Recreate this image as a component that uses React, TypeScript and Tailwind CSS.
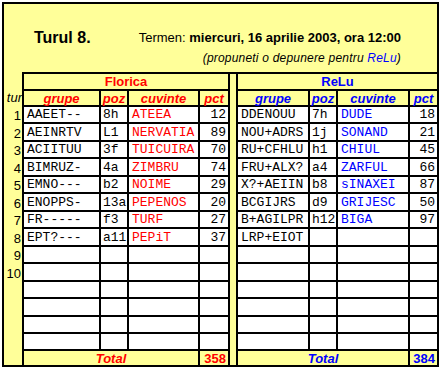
import React from 'react';

type Row = [string, string, string, string];

const florica: Row[] = [
  ['AAEET--', '8h', 'ATEEA', '12'],
  ['AEINRTV', 'L1', 'NERVATIA', '89'],
  ['ACIITUU', '3f', 'TUICUIRA', '70'],
  ['BIMRUZ-', '4a', 'ZIMBRU', '74'],
  ['EMNO---', 'b2', 'NOIME', '29'],
  ['ENOPPS-', '13a', 'PEPENOS', '20'],
  ['FR-----', 'f3', 'TURF', '27'],
  ['EPT?---', 'a11', 'PEPiT', '37'],
];

const relu: Row[] = [
  ['DDENOUU', '7h', 'DUDE', '18'],
  ['NOU+ADRS', '1j', 'SONAND', '21'],
  ['RU+CFHLU', 'h1', 'CHIUL', '45'],
  ['FRU+ALX?', 'a4', 'ZARFUL', '66'],
  ['X?+AEIIN', 'b8', 'sINAXEI', '87'],
  ['BCGIJRS', 'd9', 'GRIJESC', '50'],
  ['B+AGILPR', 'h12', 'BIGA', '97'],
  ['LRP+EIOT', '', '', ''],
];

const ROWS = 14;
const empty: Row = ['', '', '', ''];
const pad = (r: Row[]) => Array.from({ length: ROWS }, (_, i) => r[i] ?? empty);

const mono = "font-['Liberation_Mono','Courier_New',monospace] text-[13px] leading-none whitespace-nowrap";
const cell = 'border-b-2 border-black bg-white flex items-center';

function Side({ row, color, last }: { row: Row; color: string; last: boolean }) {
  return (
    <>
      <div className={`${cell} border-r-2 pl-[3px] ${mono}`}>{row[0]}</div>
      <div className={`${cell} border-r-2 pl-[2px] ${mono}`}>{row[1]}</div>
      <div className={`${cell} border-r-2 pl-[3px] ${mono} ${color}`}>{row[2]}</div>
      <div className={`${cell} ${last ? '' : 'border-r-2'} justify-end pr-[2px] ${mono}`}>{row[3]}</div>
    </>
  );
}

function SubHeads({ color, last }: { color: string; last: boolean }) {
  const h = `border-b-2 border-black flex items-center justify-center font-bold italic text-[13px] leading-none ${color}`;
  return (
    <>
      <div className={`${h} border-r-2`}>grupe</div>
      <div className={`${h} border-r-2`}>poz</div>
      <div className={`${h} border-r-2`}>cuvinte</div>
      <div className={`${h} ${last ? '' : 'border-r-2'}`}>pct</div>
    </>
  );
}

export default function App() {
  const f = pad(florica);
  const r = pad(relu);

  return (
    <div className="ml-[2px] mt-[2px] w-[437px] h-[365px] border-2 border-black bg-[#ffff99] text-black font-['Liberation_Sans',Arial,sans-serif] grid grid-cols-[20px_77px_28px_71px_30px_8px_72px_28px_72px_27px] grid-rows-[68px_19px_16px_17px_18px_17px_18px_17px_18px_17px_18px_17px_18px_17px_18px_17px_17px_14px]">
      {/* Titlu */}
      <div className="col-span-10 flex items-start justify-between pl-[30px] pr-[36px] pt-[26px]">
        <div className="text-[16px] font-bold leading-[19px] -mt-[2px]">Turul 8.</div>
        <div className="flex flex-col items-end">
          <div className="text-[13px] leading-[16px]">
            Termen: <span className="font-bold">miercuri, 16 aprilie 2003, ora 12:00</span>
          </div>
          <div className="text-[12px] italic leading-[16px] mt-[4px] tracking-[0.2px]">
            (propuneti o depunere pentru <span className="text-[#0000ff]">ReLu</span>)
          </div>
        </div>
      </div>

      {/* Capete de tabel */}
      <div className="row-span-2 border-r-2 border-black flex items-end justify-end text-[13px] italic leading-[16px] pb-[1px]">
        tur
      </div>
      <div className="col-span-4 border-t-2 border-r-2 border-b-2 border-black flex items-center justify-center font-bold text-[13px] leading-none text-[#ff0000]">
        Florica
      </div>
      <div className="row-span-17 border-t-2 border-r-2 border-black"></div>
      <div className="col-span-4 border-t-2 border-b-2 border-black flex items-center justify-center font-bold text-[13px] leading-none text-[#0000ff]">
        ReLu
      </div>
      <SubHeads color="text-[#ff0000]" last={false} />
      <SubHeads color="text-[#0000ff]" last={true} />

      {/* Randuri */}
      {f.map((row, i) => (
        <React.Fragment key={i}>
          <div className="border-r-2 border-black flex items-center justify-end pr-[1px] text-[13px] leading-none">
            {i < 10 ? i + 1 : ''}
          </div>
          <Side row={row} color="text-[#ff0000]" last={false} />
          <Side row={r[i]} color="text-[#0000ff]" last={true} />
        </React.Fragment>
      ))}

      {/* Total */}
      <div className="border-r-2 border-black"></div>
      <div className="col-span-3 border-r-2 border-black flex items-center justify-center font-bold italic text-[13px] leading-none text-[#ff0000]">
        Total
      </div>
      <div className="border-r-2 border-black flex items-center justify-end pr-[2px] font-bold text-[13px] leading-none text-[#ff0000]">
        358
      </div>
      <div className="col-span-3 border-r-2 border-black flex items-center justify-center font-bold italic text-[13px] leading-none text-[#0000ff]">
        Total
      </div>
      <div className="flex items-center justify-end pr-[2px] font-bold text-[13px] leading-none text-[#0000ff]">
        384
      </div>
    </div>
  );
}
